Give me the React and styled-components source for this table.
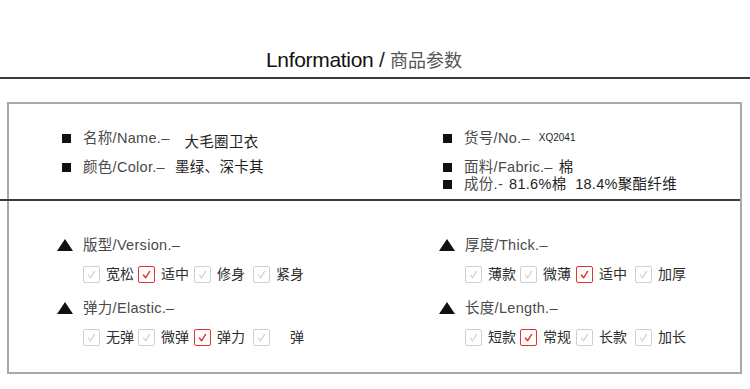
import React from 'react';
import styled, { createGlobalStyle } from 'styled-components';

const Global = createGlobalStyle`
    body {
        margin: 0;
        background: #fff;
        font-family: "Liberation Sans", "Noto Sans CJK SC", sans-serif;
    }
`;

const top = [
    [
        { label: '名称/Name.–', value: '大毛圈卫衣', gap: 15, drop: 7 },
        { label: '颜色/Color.–', value: '墨绿、深卡其', gap: 10, mt: 11 },
    ],
    [
        { label: '货号/No.–', value: 'XQ2041', gap: 9, small: true },
        { label: '面料/Fabric.–', value: '棉', gap: 6, mt: 11 },
        { label: '成份.-', value: '81.6%棉\u00a0\u00a018.4%聚酯纤维', gap: 6, mt: -1 },
    ],
];

const groups = [
    [
        { title: '版型/Version.–', opts: ['宽松', '适中', '修身', '紧身'], on: 1 },
        { title: '弹力/Elastic.–', opts: ['无弹', '微弹', '弹力', '\u3000弹'], on: 2 },
    ],
    [
        { title: '厚度/Thick.–', opts: ['薄款', '微薄', '适中', '加厚'], on: 2 },
        { title: '长度/Length.–', opts: ['短款', '常规', '长款', '加长'], on: 1 },
    ],
];

function Check({ on }) {
    return (
        <Box $on={on}>
            <svg width="15" height="15" viewBox="0 0 15 15">
                <path d="M4.4 8 L6.6 10.8 L10.6 4.4" fill="none"
                    stroke={on ? '#e8302c' : '#cdcdcd'} strokeWidth={on ? 1.4 : 1.1}
                    strokeLinecap="round" strokeLinejoin="round" />
            </svg>
        </Box>
    );
}

function App() {
    return (
        <Page>
            <Global />
            <Header>
                <Title>Lnformation <span>/</span> <em>商品参数</em></Title>
            </Header>
            <Frame>
                <InfoGrid>
                    {top.map((col, i) => (
                        <Column key={i}>
                            {col.map((r) => (
                                <Row key={r.label} $mt={r.mt || 0}>
                                    <Square />
                                    <Label>{r.label}</Label>
                                    <Value $gap={r.gap} $drop={r.drop || 0} $small={r.small}>{r.value}</Value>
                                </Row>
                            ))}
                        </Column>
                    ))}
                </InfoGrid>
                <Divider />
                <OptionGrid>
                    {groups.map((col, i) => (
                        <Column key={i}>
                            {col.map((g, j) => (
                                <Group key={g.title} $first={j === 0}>
                                    <Heading>
                                        <Triangle />
                                        <Label>{g.title}</Label>
                                    </Heading>
                                    <Options>
                                        {g.opts.map((o, k) => (
                                            <Option key={k}>
                                                <Check on={k === g.on} />
                                                <OptText>{o}</OptText>
                                            </Option>
                                        ))}
                                    </Options>
                                </Group>
                            ))}
                        </Column>
                    ))}
                </OptionGrid>
            </Frame>
        </Page>
    );
}

const Page = styled.div`
    width: 750px;
    height: 389px;
    overflow: hidden;
`;

const Header = styled.header`
    display: flex;
    justify-content: center;
    padding: 48px 22px 4px 0;
    border-bottom: 2px solid #3a3a3a;
`;

const Title = styled.h1`
    margin: 0;
    font-size: 21px;
    line-height: 24px;
    font-weight: normal;
    color: #111;
    letter-spacing: -0.3px;

    span {
        color: #222;
    }
    em {
        font-style: normal;
        font-size: 18px;
        color: #555;
        letter-spacing: 0;
    }
`;

const Frame = styled.section`
    box-sizing: border-box;
    margin: 23px 0 0 7px;
    width: 735px;
    height: 272px;
    border: 2px solid #a8a8a8;
`;

const InfoGrid = styled.div`
    display: grid;
    grid-template-columns: 381px 1fr;
    height: 95px;
    padding: 25px 0 0 53px;
    box-sizing: border-box;
`;

const Column = styled.div`
    display: flex;
    flex-direction: column;
`;

const Row = styled.div`
    display: flex;
    align-items: center;
    height: 18px;
    margin-top: ${(p) => p.$mt}px;
`;

const Square = styled.i`
    width: 9px;
    height: 9px;
    background: #111;
    margin-right: 12px;
    flex: none;
`;

const Label = styled.span`
    font-size: 14.5px;
    letter-spacing: 0.3px;
    line-height: 18px;
    color: #4a4a4a;
    white-space: nowrap;
`;

const Value = styled.span`
    margin-left: ${(p) => p.$gap}px;
    margin-top: ${(p) => p.$drop}px;
    font-size: ${(p) => (p.$small ? 10 : 14.5)}px;
    letter-spacing: ${(p) => (p.$small ? 0 : 0.3)}px;
    line-height: 18px;
    color: #1e1e1e;
    white-space: nowrap;
`;

const Divider = styled.hr`
    margin: 0 0 0 -9px;
    border: none;
    border-top: 2px solid #3c3c3c;
    width: calc(100% + 9px);
`;

const OptionGrid = styled.div`
    display: grid;
    grid-template-columns: 382px 1fr;
    padding: 35px 0 0 48px;
`;

const Group = styled.div`
    margin-top: ${(p) => (p.$first ? 0 : 16)}px;
`;

const Heading = styled.div`
    display: flex;
    align-items: center;
    height: 18px;
`;

const Triangle = styled.i`
    width: 0;
    height: 0;
    border-left: 8px solid transparent;
    border-right: 8px solid transparent;
    border-bottom: 12px solid #111;
    margin-right: 10px;
    flex: none;
`;

const Options = styled.div`
    display: grid;
    grid-template-columns: 55px 56px 59px auto;
    margin: 11px 0 0 26px;
`;

const Option = styled.label`
    display: flex;
    align-items: center;
    height: 18px;
`;

const OptText = styled.span`
    margin-left: 6px;
    font-size: 14px;
    line-height: 18px;
    color: #2e2e2e;
    white-space: nowrap;
`;

const Box = styled.span`
    box-sizing: border-box;
    width: 17px;
    height: 17px;
    display: flex;
    align-items: center;
    justify-content: center;
    border: ${(p) => (p.$on ? '1.5px solid #e8302c' : '1px solid #cfcfcf')};
    border-radius: 2px;
    flex: none;
`;

export default App;
